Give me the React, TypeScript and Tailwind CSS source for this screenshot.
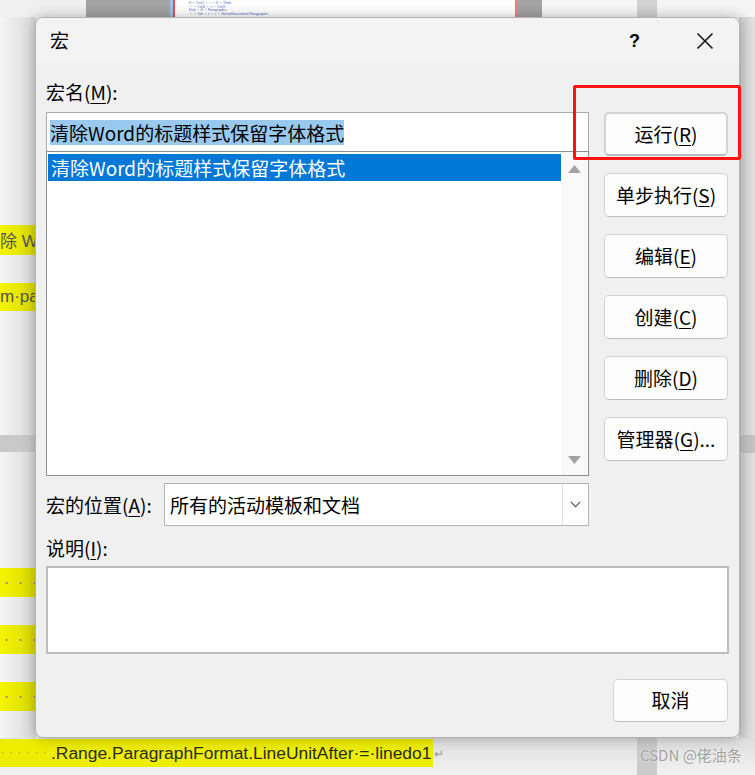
import React from "react";

const btn =
  "h-[44px] w-[124px] rounded-[5px] border border-[#d3d3d3] border-b-[#bdbdbd] bg-[#fdfdfd] flex items-center justify-center text-[19px] text-black";

function Key({ k }: { k: string }) {
  return <span className="underline underline-offset-[3px] decoration-1">{k}</span>;
}

function Triangle({ up }: { up?: boolean }) {
  return (
    <svg width="13" height="8" viewBox="0 0 13 8">
      <path d={up ? "M0 8 L6.5 0 L13 8 Z" : "M0 0 L6.5 8 L13 0 Z"} fill="#a3a3a3" />
    </svg>
  );
}

function Dots({ top }: { top: string }) {
  return (
    <div
      className={
        "absolute left-0 h-[29px] w-[36px] bg-gradient-to-r from-[#f5f500] to-[#d9d900] flex items-center pl-[2px] text-[9px] text-[#8a8a8a] tracking-[1.5px] whitespace-nowrap " +
        top
      }>
      · · · ·
    </div>
  );
}

export default function App() {
  return (
    <div className="relative w-[755px] h-[775px] overflow-hidden bg-[#eeeeee] pl-[35px] pt-[17px] font-['Noto_Sans_CJK_SC','Noto_Sans',sans-serif]">
      {/* document behind the dialog */}
      <div className="absolute inset-0 z-0">
        {/* top strip */}
        <div className="absolute top-0 left-0 h-[17px] w-full flex">
          <div className="w-[86px] bg-[#f0f0f0]" />
          <div className="w-[84px] bg-[#a4a4a4]" />
          <div className="w-[3px] bg-[#9cc3e6]" />
          <div className="w-[2px] bg-[#e05050]" />
          <div className="w-[340px] bg-white pl-[14px] pt-[1px] flex flex-col text-[3.5px] leading-[3.5px] text-[#4a5ac8]">
            <span>If · Cnt1 · &gt; · 0 · Then</span>
            <span>· · Cnt2 · = · Cnt1</span>
            <span>End · If · Paragraphs</span>
            <span>· · Set · r · = · ActiveDocument.Paragraphs</span>
          </div>
          <div className="w-[2px] bg-[#f08080]" />
          <div className="w-[25px] bg-[#a4a4a4]" />
          <div className="w-[95px] bg-[#f7f7f7]" />
          <div className="w-[20px] bg-[#d2d2d2]" />
          <div className="flex-1 bg-[#f5f5f5]" />
        </div>
        {/* left strip */}
        <div className="absolute top-[17px] left-0 h-[722px] w-[36px] bg-gradient-to-r from-[#f6f6f6] to-[#d8d8d8]" />
        <div className="absolute top-[225px] left-0 h-[30px] w-[36px] bg-gradient-to-r from-[#f5f500] to-[#d9d900]" />
        <div className="absolute top-[225px] left-0 text-[17px] leading-[30px] text-[#555] font-['Liberation_Sans',sans-serif] whitespace-nowrap">
          <span className="font-['Noto_Sans_CJK_SC',sans-serif]">除</span> Word
        </div>
        <div className="absolute top-[283px] left-0 h-[28px] w-[36px] bg-gradient-to-r from-[#f5f500] to-[#d9d900]" />
        <div className="absolute top-[283px] left-0 text-[17px] leading-[28px] text-[#555] font-['Liberation_Sans',sans-serif] whitespace-nowrap">
          m·para
        </div>
        <div className="absolute top-[435px] left-0 h-[17px] w-[36px] bg-[#c9c9c9]" />
        <Dots top="top-[568px]" />
        <Dots top="top-[625px]" />
        <Dots top="top-[682px]" />
        {/* right strip */}
        <div className="absolute top-[17px] right-0 h-[722px] w-[16px] bg-gradient-to-r from-[#cfcfcf] to-[#e2e2e2]" />
        <div className="absolute top-[435px] right-0 h-[18px] w-[16px] bg-[#c4c4c4]" />
        {/* bottom strip */}
        <div className="absolute top-[738px] left-0 h-[37px] w-full bg-gradient-to-b from-[#dedede] to-[#f2f2f2]" />
        <div className="absolute top-[738px] left-[637px] h-[37px] w-[20px] bg-[#cbcbcb]" />
        <div className="absolute top-[739px] left-0 h-[28px] flex items-center">
          <div className="h-full w-[433px] bg-[#eded00] flex items-center whitespace-nowrap font-['Liberation_Sans',sans-serif] text-[17.4px] text-[#2b2b2b]">
            <span className="text-[9px] text-[#8a8a8a] tracking-[1.5px] pl-[1px]">· · · · · ·</span>
            <span className="ml-[3px]">.Range.ParagraphFormat.LineUnitAfter·=·linedo1</span>
          </div>
          <span className="text-[12px] text-[#9a9a9a] ml-[1px]">↵</span>
        </div>
        <div className="absolute top-[744px] left-[640px] text-[15px] leading-[22px] text-[#a0a0a0] whitespace-nowrap [text-shadow:0_0_2px_#fff]">
          CSDN @佬油条
        </div>
      </div>

      {/* dialog */}
      <div className="relative z-10 w-[705px] h-[721px] rounded-[8px] border border-[#b3b3b3] bg-[#f0f0f0] shadow-[0_0_14px_rgba(0,0,0,0.28)] flex flex-col overflow-hidden">
        <div className="h-[45px] bg-[#f3f3f3] flex items-center pl-[14px] pr-[25px] text-black">
          <span className="text-[19px] leading-[24px] flex-1 -mt-[2px]">宏</span>
          <span className="text-[18px] font-bold leading-[24px] mr-[56px] font-['Liberation_Sans',sans-serif]">?</span>
          <svg width="18" height="18" viewBox="0 0 18 18">
            <path d="M1.5 1.5 L16.5 16.5 M16.5 1.5 L1.5 16.5" stroke="#1a1a1a" strokeWidth="1.6" />
          </svg>
        </div>

        <div className="flex-1 flex flex-col px-[10px] pt-[17px] text-[19px] text-black">
          <div className="flex gap-[15px]">
            {/* left column */}
            <div className="w-[543px] flex flex-col">
              <div className="h-[24px] leading-[24px]">
                宏名(<Key k="M" />):
              </div>
              <div className="mt-[8px] h-[39px] border border-[#acacac] border-b-0 bg-white flex items-center pl-[3px] pt-[1px]">
                <span className="bg-[#99c9ef] leading-[25px]">清除Word的标题样式保留字体格式</span>
              </div>
              <div className="h-[325px] border border-[#8d8f95] bg-white flex">
                <div className="flex-1 pl-[1px] pt-[2px]">
                  <div className="h-[27px] bg-[#0078d7] text-white leading-[27px] pl-[3px]">
                    清除Word的标题样式保留字体格式
                  </div>
                </div>
                <div className="w-[27px] bg-[#f9f9f9] flex flex-col items-center justify-between pt-[13px] pb-[11px]">
                  <Triangle up />
                  <Triangle />
                </div>
              </div>
              <div className="mt-[7px] h-[43px] flex items-center">
                <span className="w-[118px] leading-[24px] whitespace-nowrap">
                  宏的位置(<Key k="A" />):
                </span>
                <div className="flex-1 h-full border border-[#b3b3b3] bg-white flex">
                  <span className="flex-1 pl-[5px] leading-[41px]">所有的活动模板和文档</span>
                  <div className="w-[26px] border-l border-[#e2e2e2] flex items-center justify-center">
                    <svg width="11" height="7" viewBox="0 0 11 7">
                      <path d="M0.8 0.8 L5.5 5.6 L10.2 0.8" stroke="#555" strokeWidth="1.2" fill="none" />
                    </svg>
                  </div>
                </div>
              </div>
            </div>

            {/* right column */}
            <div className="mt-[32px] flex flex-col gap-[17px]">
              <div className={btn + " border-2 border-[#3689d6] border-b-[#3689d6]"}>
                运行(<Key k="R" />)
              </div>
              <div className={btn}>
                单步执行(<Key k="S" />)
              </div>
              <div className={btn}>
                编辑(<Key k="E" />)
              </div>
              <div className={btn}>
                创建(<Key k="C" />)
              </div>
              <div className={btn}>
                删除(<Key k="D" />)
              </div>
              <div className={btn}>
                管理器(<Key k="G" />)...
              </div>
            </div>
          </div>

          <div className="mt-[10px] h-[24px] leading-[24px]">
            说明(<Key k="I" />):
          </div>
          <div className="mt-[6px] h-[88px] border-2 border-[#bdbdbd] bg-white" />
          <div className="mt-[25px] self-end mr-[1px] h-[43px] w-[115px] rounded-[5px] border border-[#d3d3d3] border-b-[#bdbdbd] bg-[#fdfdfd] flex items-center justify-center">
            取消
          </div>
        </div>
      </div>

      {/* annotation */}
      <div className="absolute z-20 left-[573px] top-[85px] w-[168px] h-[75px] border-[3px] border-[#ff1414] rounded-[2px]" />
    </div>
  );
}
